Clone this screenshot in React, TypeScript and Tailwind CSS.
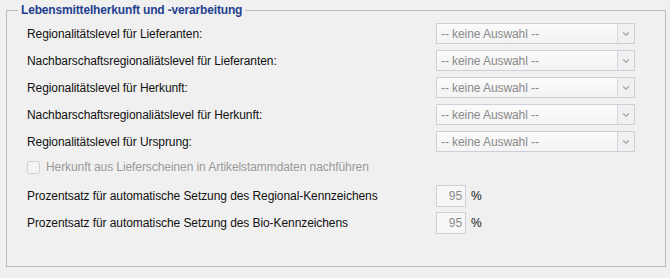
import { ChevronDown } from 'lucide-react';

const selectRows = [
  'Regionalitätslevel für Lieferanten:',
  'Nachbarschaftsregionaliätslevel für Lieferanten:',
  'Regionalitätslevel für Herkunft:',
  'Nachbarschaftsregionaliätslevel für Herkunft:',
  'Regionalitätslevel für Ursprung:',
];

const percentRows = [
  'Prozentsatz für automatische Setzung des Regional-Kennzeichens',
  'Prozentsatz für automatische Setzung des Bio-Kennzeichens',
];

function DisabledSelect() {
  return (
    <div className="flex h-[21px] w-[199px] border border-[#cfcfdb] bg-gradient-to-b from-[#fbfbfb] to-[#f3f3f3]">
      <div className="flex flex-1 items-center pl-[4px] text-[#8a8a8a]">-- keine Auswahl --</div>
      <div className="flex w-[17px] items-center justify-center border-l border-[#d6d6e0] bg-[#f0f0f0]">
        <ChevronDown className="h-[10px] w-[10px] text-[#a8a8a8]" strokeWidth={3} />
      </div>
    </div>
  );
}

export default function App() {
  return (
    <div
      className="h-[278px] w-[670px] overflow-hidden bg-[#f0f0f0] pt-[3px] pl-[6px] text-[12px] tracking-[-0.08px] text-[#111]"
      style={{ fontFamily: '"Liberation Sans", Arial, sans-serif' }}
    >
      <fieldset className="h-[264px] w-[660px] border border-[#b9b9c8]">
        <legend className="ml-[11px] px-[3px] text-[12px] leading-[15px] font-bold tracking-[-0.16px] text-[#1f3f8f]">
          Lebensmittelherkunft und -verarbeitung
        </legend>

        <div className="flex flex-col pt-[5px] pl-[20px]">
          {/* Auswahlfelder */}
          <div className="flex flex-col gap-[6px]">
            {selectRows.map((label) => (
              <div key={label} className="flex h-[21px] items-center">
                <span className="w-[409px]">{label}</span>
                <DisabledSelect />
              </div>
            ))}
          </div>

          {/* Checkbox */}
          <div className="mt-[8px] flex h-[14px] items-center text-[#9a9a9a]">
            <span className="mr-[6px] h-[13px] w-[13px] rounded-[2px] border border-[#d2d2d2] bg-[#f4f4f4]" />
            Herkunft aus Lieferscheinen in Artikelstammdaten nachführen
          </div>

          {/* Prozentsätze */}
          <div className="mt-[11px] flex flex-col gap-[5px]">
            {percentRows.map((label) => (
              <div key={label} className="flex h-[22px] items-center">
                <span className="w-[409px]">{label}</span>
                <div className="flex h-[22px] w-[30px] items-center justify-end border border-[#cfcfdb] bg-[#f7f7f7] pr-[3px] text-[#8a8a8a]">
                  95
                </div>
                <span className="ml-[5px] self-start pt-[2px]">%</span>
              </div>
            ))}
          </div>
        </div>
      </fieldset>
    </div>
  );
}
